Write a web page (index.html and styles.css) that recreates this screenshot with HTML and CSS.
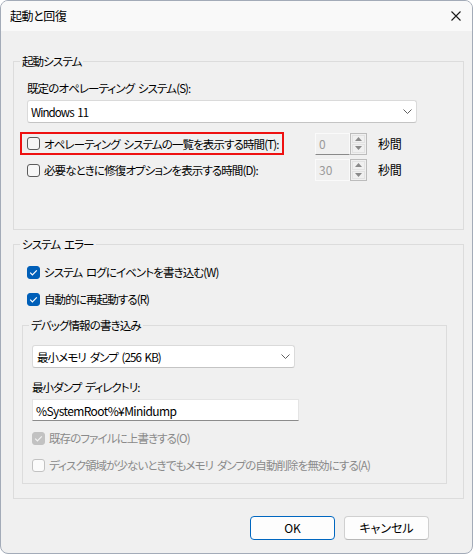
FILE: index.html
```html
<!DOCTYPE html>
<html lang="ja">
<head>
<meta charset="utf-8">
<title>起動と回復</title>
<link rel="stylesheet" href="styles.css">
</head>
<body>
<div class="window">
  <div class="titlebar">
    <span class="title">起動と回復</span>
    <svg class="close" width="10" height="10" viewBox="0 0 10 10"><path d="M0.5 0.5 L9.5 9.5 M9.5 0.5 L0.5 9.5" stroke="#1a1a1a" stroke-width="1.1" fill="none"/></svg>
  </div>
  <div class="body">
    <fieldset class="group boot">
      <legend>起動システム</legend>
      <div class="gc boot-c">
        <div class="field-label">既定のオペレーティング システム(S):</div>
        <div class="select boot-select">
          <span>Windows 11</span>
          <svg class="chev" width="9" height="5" viewBox="0 0 9 5"><path d="M0.5 0.5 L4.5 4.5 L8.5 0.5" stroke="#606060" stroke-width="1" fill="none"/></svg>
        </div>
        <div class="timer-row first">
          <div class="cell">
            <label class="check highlight"><span class="box"></span><span>オペレーティング システムの一覧を表示する時間(T):</span></label>
          </div>
          <div class="spin">
            <div class="spin-input focus">0</div>
            <div class="spin-btns">
              <span class="sb"><svg width="7" height="4" viewBox="0 0 7 4"><path d="M0 4 L3.5 0 L7 4 Z" fill="#8a8a8a"/></svg></span>
              <span class="sb"><svg width="7" height="4" viewBox="0 0 7 4"><path d="M0 0 L3.5 4 L7 0 Z" fill="#8a8a8a"/></svg></span>
            </div>
          </div>
          <span class="unit">秒間</span>
        </div>
        <div class="timer-row second">
          <div class="cell">
            <label class="check"><span class="box"></span><span>必要なときに修復オプションを表示する時間(D):</span></label>
          </div>
          <div class="spin">
            <div class="spin-input">30</div>
            <div class="spin-btns">
              <span class="sb"><svg width="7" height="4" viewBox="0 0 7 4"><path d="M0 4 L3.5 0 L7 4 Z" fill="#8a8a8a"/></svg></span>
              <span class="sb"><svg width="7" height="4" viewBox="0 0 7 4"><path d="M0 0 L3.5 4 L7 0 Z" fill="#8a8a8a"/></svg></span>
            </div>
          </div>
          <span class="unit">秒間</span>
        </div>
      </div>
    </fieldset>

    <fieldset class="group err">
      <legend>システム エラー</legend>
      <div class="gc err-c">
        <label class="check row r1"><span class="box checked"><svg width="13" height="13" viewBox="0 0 13 13"><path d="M3.2 6.6 L5.4 8.8 L9.8 4.4" stroke="#fff" stroke-width="1.2" fill="none"/></svg></span><span>システム ログにイベントを書き込む(W)</span></label>
        <label class="check row r2"><span class="box checked"><svg width="13" height="13" viewBox="0 0 13 13"><path d="M3.2 6.6 L5.4 8.8 L9.8 4.4" stroke="#fff" stroke-width="1.2" fill="none"/></svg></span><span>自動的に再起動する(R)</span></label>

        <fieldset class="group debug">
          <legend>デバッグ情報の書き込み</legend>
          <div class="gc debug-c">
            <div class="select dump-select">
              <span>最小メモリ ダンプ (256 KB)</span>
              <svg class="chev" width="9" height="5" viewBox="0 0 9 5"><path d="M0.5 0.5 L4.5 4.5 L8.5 0.5" stroke="#606060" stroke-width="1" fill="none"/></svg>
            </div>
            <div class="field-label dir-label">最小ダンプ ディレクトリ:</div>
            <div class="textbox">%SystemRoot%¥Minidump</div>
            <label class="check row disabled d1"><span class="box checked dis"><svg width="13" height="13" viewBox="0 0 13 13"><path d="M3.2 6.6 L5.4 8.8 L9.8 4.4" stroke="#f2f2f2" stroke-width="1.2" fill="none"/></svg></span><span>既存のファイルに上書きする(O)</span></label>
            <label class="check row disabled d2"><span class="box dis"></span><span>ディスク領域が少ないときでもメモリ ダンプの自動削除を無効にする(A)</span></label>
          </div>
        </fieldset>
      </div>
    </fieldset>
  </div>
  <div class="buttons">
    <button class="btn default">OK</button>
    <button class="btn">キャンセル</button>
  </div>
</div>
</body>
</html>
```

FILE: styles.css
```css
* { box-sizing: border-box; }
html, body { margin: 0; padding: 0; background: #ffffff; }
body {
  font-family: "Noto Sans CJK JP", "Noto Sans", sans-serif;
  font-size: 11.5px;
  line-height: 16px;
  letter-spacing: -0.9px;
  word-spacing: 2px;
  color: #000;
  font-feature-settings: "palt";
}
.window {
  width: 473px;
  height: 554px;
  border: 1px solid #a3abb8;
  border-radius: 8px;
  background: #f0f0f0;
  overflow: hidden;
  display: flex;
  flex-direction: column;
}
.titlebar {
  height: 30px;
  background: #f9f9f9;
  display: flex;
  align-items: center;
  justify-content: space-between;
  padding: 0 11px 0 9px;
}
.title { font-size: 12px; letter-spacing: -0.4px; }
.close { display: block; }
.body {
  padding: 22px 8px 0 12px;
}
.group {
  margin: 0;
  padding: 0;
  border: 1px solid #dcdcdc;
  min-width: 0;
}
.group legend {
  margin-left: 6px;
  padding: 0 2px;
  line-height: 16px;
}
.boot-c { padding: 11px 13px 48px 13px; }
.field-label { height: 16px; white-space: nowrap; }
.select {
  margin-top: 4px;
  height: 23px;
  background: #fff;
  border: 1px solid #dadada;
  border-bottom-color: #c4c4c4;
  border-radius: 3px;
  display: flex;
  align-items: center;
  justify-content: space-between;
  padding: 0 4px 0 3px;
}
.boot-select { width: 390px; }
.chev { display: block; }
.timer-row {
  display: grid;
  grid-template-columns: 277px 52px auto;
  column-gap: 11px;
  align-items: center;
}
.timer-row.first { margin-top: 9px; height: 23px; }
.timer-row.second { margin-top: 4px; height: 22px; }
.cell { display: flex; align-items: center; min-width: 0; }
.check {
  display: inline-flex;
  align-items: center;
  white-space: nowrap;
  gap: 4px;
}
.highlight {
  margin-left: -7px;
  border: 2px solid #ee1111;
  height: 23px;
  padding: 0 4px 0 5px;
}
.box {
  width: 13px;
  height: 13px;
  flex: 0 0 13px;
  border: 1px solid #5c5c5c;
  border-radius: 3px;
  background: #f7f7f7;
  display: inline-flex;
  align-items: center;
  justify-content: center;
}
.box svg { display: block; margin: -1px; }
.box.checked { background: #005fb8; border-color: #005fb8; }
.box.dis { border-color: #c2c2c2; background: #fbfbfb; }
.box.checked.dis { background: #c2c2c2; border-color: #c2c2c2; }
.spin {
  display: flex;
  height: 22px;
}
.spin-input {
  width: 35px;
  height: 22px;
  border: 1px solid #fafafa;
  background: #f0f0f0;
  color: #9a9a9a;
  padding: 2px 0 0 3px;
  line-height: 16px;
  font-size: 12px;
  letter-spacing: 0;
}
.spin-input.focus { border-bottom-color: #8a8a8a; }
.spin-btns {
  width: 17px;
  height: 22px;
  border: 1px solid #bcbcbc;
  padding: 1px;
  display: flex;
  flex-direction: column;
  gap: 1px;
}
.sb {
  flex: 1;
  border: 1px solid #e2e2e2;
  background: #f0f0f0;
  display: flex;
  align-items: center;
  justify-content: center;
}
.sb svg { display: block; }
.unit { white-space: nowrap; font-size: 12px; letter-spacing: -0.3px; }

.err { margin-top: 6px; }
.err-c { padding: 12px 16px 14px 8px; }
.row { display: flex; height: 16px; }
.err-c > .row { margin-left: 5px; }
.r2 { margin-top: 11px; }
.debug { margin-top: 10px; }
.debug-c { padding: 12px 9px 10px 9px; }
.dump-select { margin-top: 0; width: 263px; padding-left: 4px; }
.dir-label { margin-top: 11px; }
.textbox {
  margin-top: 4px;
  width: 267px;
  height: 22px;
  background: #fff;
  border: 1px solid #e4e4e4;
  border-bottom-color: #8c8c8c;
  padding: 2px 3px 0 3px;
  font-size: 12px;
  letter-spacing: -0.6px;
  line-height: 17px;
  white-space: nowrap;
}
.disabled { color: #8a8a8a; }
.d1 { margin-top: 9px; }
.d2 { margin-top: 11px; }

.buttons {
  display: flex;
  justify-content: flex-end;
  gap: 9px;
  padding: 17px 43px 0 0;
}
.btn {
  width: 85px;
  height: 24px;
  font: inherit;
  font-size: 12px;
  letter-spacing: 0;
  background: #fdfdfd;
  border: 1px solid #d0d0d0;
  border-bottom-color: #b8b8b8;
  border-radius: 4px;
  color: #000;
  padding: 0;
}
.btn.default {
  border: 1px solid #0067c0;
}
```
